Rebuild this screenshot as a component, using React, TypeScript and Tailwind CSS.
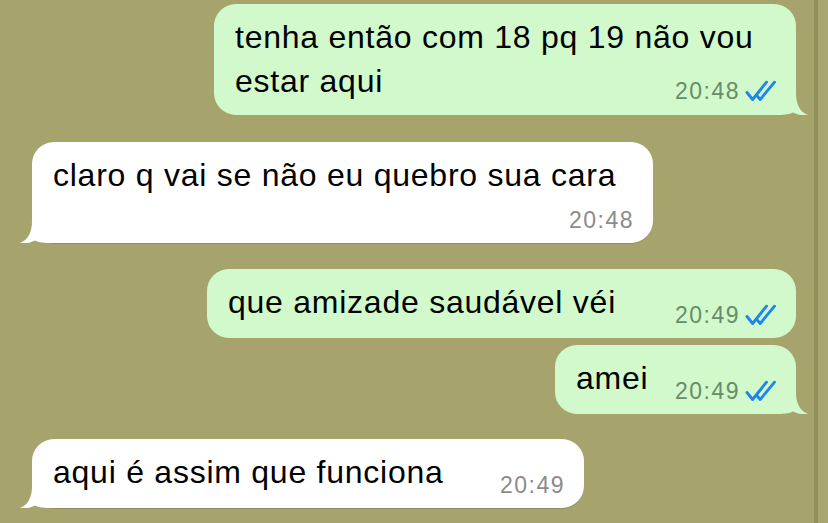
function Checks() {
  return (
    <svg width="32" height="22" viewBox="0 0 32 22" fill="none" className="shrink-0">
      <path d="M3 12.5 L8.6 19.5 L22.5 2.2" stroke="#1f86ee" strokeWidth="2.9" strokeLinecap="round" strokeLinejoin="round" />
      <path d="M13.4 16.3 L16.2 19.5 L30.5 2.2" stroke="#1f86ee" strokeWidth="2.9" strokeLinecap="round" strokeLinejoin="round" />
    </svg>
  );
}

function Meta({ time, out, className = "" }: { time: string; out?: boolean; className?: string }) {
  return (
    <div className={`flex items-center gap-[4px] shrink-0 ${className}`}>
      <span className={`text-[23px] leading-[26px] tracking-[1.5px] ${out ? "text-[#6b8b68]" : "text-[#8b8b8b]"}`}>{time}</span>
      {out && <Checks />}
    </div>
  );
}

function Tail({ out }: { out?: boolean }) {
  return (
    <svg
      width="34"
      height="22"
      viewBox="0 0 34 22"
      className={out ? "absolute bottom-0 right-[-12px] fill-[#d1f9cc]" : "absolute bottom-0 left-[-12px] -scale-x-100 fill-white"}
    >
      <path d="M0 0 H22 C22 11 25.5 18.5 34 22 C28.5 22.8 23 21.6 19 19.4 C15 21.4 10 22 0 22 Z" />
    </svg>
  );
}

export default function App() {
  const text = "text-[32px] leading-[44px] tracking-[0.75px] text-black";
  return (
    <div className="flex w-[828px] h-[523px] overflow-hidden bg-[#a6a46c] font-['Liberation_Sans',Arial,sans-serif]">
      <div className="flex w-[814px] flex-col pt-[4px]" data-name="Messages">
        <div className="relative self-end mr-[18px] flex w-[582px] flex-col rounded-[22px] bg-[#d1f9cc] pl-[21px] pr-[20px] pt-[11px] pb-[11px]">
          <p className={text}>
            tenha então com 18 pq 19 não vou
            <br />
            estar aqui
          </p>
          <Meta time="20:48" out className="self-end -mt-[25px]" />
          <Tail out />
        </div>

        <div className="relative ml-[32px] mt-[27px] flex w-[621px] flex-col rounded-[22px] bg-white pl-[21px] pr-[19px] pt-[11px] pb-[10px] shadow-[0_1px_0.5px_rgba(0,0,0,0.13)]">
          <p className={text}>claro q vai se não eu quebro sua cara</p>
          <Meta time="20:48" className="self-end mt-[10px]" />
          <Tail />
        </div>

        <div className="relative self-end mr-[18px] mt-[26px] flex w-[589px] items-end justify-between rounded-[22px] bg-[#d1f9cc] pl-[21px] pr-[20px] pt-[11px] pb-[14px]">
          <p className={text}>que amizade saudável véi</p>
          <Meta time="20:49" out className="-mb-[4px]" />
        </div>

        <div className="relative self-end mr-[18px] mt-[7px] flex w-[241px] items-end justify-between rounded-[22px] bg-[#d1f9cc] pl-[21px] pr-[20px] pt-[11px] pb-[14px]">
          <p className={text}>amei</p>
          <Meta time="20:49" out className="-mb-[4px]" />
          <Tail out />
        </div>

        <div className="relative ml-[32px] mt-[25px] flex w-[552px] items-end justify-between rounded-[22px] bg-white pl-[21px] pr-[19px] pt-[11px] pb-[14px] shadow-[0_1px_0.5px_rgba(0,0,0,0.13)]">
          <p className={text}>aqui é assim que funciona</p>
          <Meta time="20:49" className="-mb-[4px]" />
          <Tail />
        </div>
      </div>
      <div className="w-[4px] bg-[#918f5b]" />
      <div className="flex-1 bg-[#a8a66e]" />
    </div>
  );
}
